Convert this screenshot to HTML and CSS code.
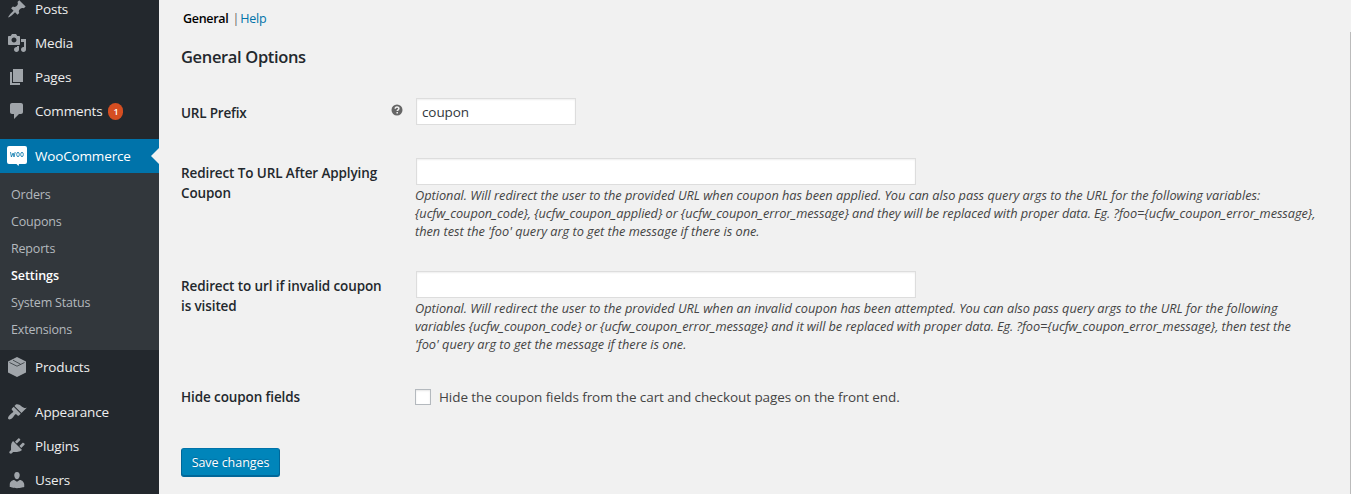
FILE: index.html
```html
<!DOCTYPE html>
<html lang="en">
<head>
<meta charset="utf-8">
<title>WooCommerce Settings</title>
<link rel="stylesheet" href="styles.css">
</head>
<body>
<div class="admin">
  <nav class="sidebar">
    <a class="item"><svg class="icon" viewBox="0 0 20 20"><path d="M10.44 3.02l1.82-1.82 6.36 6.35-1.83 1.82c-1.05-.68-2.48-.57-3.41.36l-.75.75c-.92.93-1.04 2.35-.35 3.41l-1.83 1.82-2.41-2.41-2.8 2.79c-.42.42-3.38 2.71-3.8 2.29s1.86-3.39 2.28-3.81l2.79-2.79L4.1 9.36l1.83-1.82c1.05.69 2.48.57 3.4-.36l.75-.75c.93-.92 1.05-2.35.36-3.41z"/></svg><span>Posts</span></a>
    <a class="item"><svg class="icon" viewBox="0 0 20 20"><path d="M13 11V4c0-.55-.45-1-1-1h-1.67L9 1H5L3.67 3H2c-.55 0-1 .45-1 1v7c0 .55.45 1 1 1h10c.55 0 1-.45 1-1zM7 4.5c1.38 0 2.5 1.12 2.5 2.5S8.38 9.5 7 9.5 4.5 8.38 4.5 7 5.62 4.5 7 4.5zM14 6h5v10.5c0 1.38-1.12 2.5-2.5 2.5S14 17.88 14 16.5s1.12-2.5 2.5-2.5c.17 0 .34.02.5.05V9h-3V6zm-4 8.05V13h2v3.5c0 1.38-1.12 2.5-2.5 2.5S7 17.88 7 16.5 8.12 14 9.5 14c.17 0 .34.02.5.05z"/></svg><span>Media</span></a>
    <a class="item"><svg class="icon" viewBox="0 0 20 20"><path d="M6 15V2h10v13H6zm-1 1h8v2H3V5h2v11z"/></svg><span>Pages</span></a>
    <a class="item"><svg class="icon" viewBox="0 0 20 20"><path d="M5 2h9c1.1 0 2 .9 2 2v7c0 1.1-.9 2-2 2h-2l-5 5v-5H5c-1.1 0-2-.9-2-2V4c0-1.1.9-2 2-2z"/></svg><span>Comments</span><span class="count">1</span></a>
    <a class="item current"><svg class="icon woo" viewBox="0 0 20 20"><path d="M2 0h16a2 2 0 0 1 2 2v14a2 2 0 0 1-2 2h-6l-.5 2-2-2H2a2 2 0 0 1-2-2V2a2 2 0 0 1 2-2z"/><path class="woo-mark" d="M3.500 6l.9 5 1.700-4 .9 4L8.200 6"/><ellipse class="woo-mark" cx="11" cy="8.500" rx="1.300" ry="2.200"/><ellipse class="woo-mark" cx="15" cy="8.500" rx="1.300" ry="2.200"/></svg><span>WooCommerce</span></a>
    <div class="submenu">
      <a>Orders</a><a>Coupons</a><a>Reports</a><a class="active">Settings</a><a>System Status</a><a>Extensions</a>
    </div>
    <a class="item"><svg class="icon" viewBox="0 0 20 20"><path d="M10 0l9 4.500v11L10 20l-9-4.500v-11z"/><path class="box-line" d="M2.500 5.500L10 9.200l7.500-3.700M6 3.200l7.500 4"/></svg><span>Products</span></a>
    <a class="item spaced"><svg class="icon" viewBox="0 0 20 20"><path d="M14.480 11.060L7.410 3.990l1.500-1.500c.5-.56 2.300-.47 3.510.32 1.210.8 1.430 1.280 2.910 2.100 1.180.64 2.450 1.260 4.450.85zm-.71.71L6.700 4.700 4.930 6.470c-.39.39-.39 1.020 0 1.410l1.060 1.060c.39.39.39 1.030 0 1.420-.6.6-1.430 1.110-2.210 1.690-.35.26-.7.53-1.010.84C1.430 14.230.4 16.080 1.400 17.070c.99 1 2.840-.03 4.180-1.360.31-.31.58-.66.85-1.020.57-.78 1.080-1.610 1.690-2.210.39-.39 1.020-.39 1.410 0l1.060 1.060c.39.39 1.020.39 1.410 0z"/></svg><span>Appearance</span></a>
    <a class="item"><svg class="icon" viewBox="0 0 20 20"><path d="M13.110 4.360L9.870 7.600 8 5.730l3.240-3.240c.35-.34 1.050-.2 1.560.32.52.51.66 1.210.31 1.550zm-8 1.770l.91-1.120 9.010 9.010-1.190.84c-.71.71-2.630 1.160-3.820 1.160H6.140L4.900 17.260c-.59.59-1.540.59-2.120 0-.59-.58-.59-1.530 0-2.120l1.240-1.240v-3.880c0-1.130.4-3.190 1.090-3.890zm7.260 3.970l3.240-3.240c.34-.35 1.040-.21 1.550.31.52.51.66 1.210.31 1.550l-3.240 3.250z"/></svg><span>Plugins</span></a>
    <a class="item"><svg class="icon" viewBox="0 0 20 20"><path d="M10 9.250c-2.270 0-2.730-3.440-2.730-3.440C7 4.020 7.820 2 9.970 2c2.160 0 2.980 2.020 2.710 3.810 0 0-.41 3.440-2.680 3.440zm0 2.570L12.720 10c2.390 0 4.520 2.330 4.520 4.530v2.490s-3.650 1.130-7.240 1.130c-3.650 0-7.240-1.130-7.240-1.130v-2.490c0-2.250 1.940-4.480 4.470-4.480z"/></svg><span>Users</span></a>
  </nav>
  <main class="content">
    <div class="tabs"><b>General</b><span class="bar">|</span><a>Help</a></div>
    <h2>General Options</h2>
    <div class="row row-prefix">
      <label>URL Prefix</label>
      <svg class="tip" viewBox="0 0 12 12"><circle cx="6" cy="6" r="5.500"/><path d="M4.200 4.700c0-2.400 3.700-2.300 3.700-.2 0 1.300-1.700 1.300-1.700 2.600M6.200 8.100v1.400"/></svg>
      <input class="short" type="text" value="coupon">
    </div>
    <div class="row row-redirect">
      <label>Redirect To URL After Applying<br>Coupon</label>
      <div class="field"><input type="text">
        <p>Optional. Will redirect the user to the provided URL when coupon has been applied. You can also pass query args to the URL for the following variables:<br><span class="tight">{ucfw_coupon_code}, {ucfw_coupon_applied} or {ucfw_coupon_error_message} and they will be replaced with proper data. Eg. ?foo={ucfw_coupon_error_message},</span><br>then test the 'foo' query arg to get the message if there is one.</p></div>
    </div>
    <div class="row row-invalid">
      <label>Redirect to url if invalid coupon<br>is visited</label>
      <div class="field"><input type="text">
        <p>Optional. Will redirect the user to the provided URL when an invalid coupon has been attempted. You can also pass query args to the URL for the following<br><span class="tight">variables {ucfw_coupon_code} or {ucfw_coupon_error_message} and it will be replaced with proper data. Eg. ?foo={ucfw_coupon_error_message}, then test the</span><br>'foo' query arg to get the message if there is one.</p></div>
    </div>
    <div class="row row-hide">
      <label>Hide coupon fields</label>
      <div class="check"><span class="box"></span><span>Hide the coupon fields from the cart and checkout pages on the front end.</span></div>
    </div>
    <button class="save">Save changes</button>
  </main>
  <div class="edge"></div>
</div>
</body>
</html>
```

FILE: styles.css
```css
* { box-sizing: border-box; }
body {
  margin: 0;
  height: 494px;
  overflow: hidden;
  background: #f1f1f1;
  color: #444;
  font-family: "Open Sans", "Noto Sans", sans-serif;
  font-size: 13px;
}
.admin { display: flex; height: 494px; overflow: hidden; white-space: nowrap; }

.sidebar { width: 159px; flex: none; background: #23282d; }
.item {
  display: flex;
  align-items: center;
  height: 34px;
  padding-left: 7px;
  color: #eee;
  font-size: 13.5px;
  letter-spacing: -0.16px;
}
.item:first-child { margin-top: -8px; }
.item.spaced { margin-top: 11px; }
.item.current {
  position: relative;
  margin-top: 11px;
  background: #0073aa;
  color: #fff;
}
.item.current::after {
  content: "";
  position: absolute;
  right: 0;
  top: 9px;
  border: 8px solid transparent;
  border-left: 0;
  border-right-color: #f1f1f1;
}
.icon { width: 20px; height: 20px; margin-right: 8px; fill: #a0a5aa; flex: none; }
.woo { fill: #fff; }
.woo .woo-mark { fill: none; stroke: #0073aa; stroke-width: 0.8; }
.box-line { fill: none; stroke: #23282d; stroke-width: 0.7; }
.count {
  width: 15px;
  height: 17px;
  margin-left: 6px;
  border-radius: 8px;
  background: #d54e21;
  color: #fff;
  font-size: 9px;
  font-weight: 600;
  line-height: 17px;
  text-align: center;
}
.submenu { padding: 8px 0 7px 11px; background: #32373c; }
.submenu a {
  display: block;
  height: 27px;
  color: #b4b9be;
  font-size: 12.5px;
  letter-spacing: -0.18px;
  line-height: 27px;
}
.submenu .active { color: #fff; font-weight: 600; letter-spacing: -0.05px; }

.content { width: 1190px; padding: 10px 0 0 22px; }
.tabs { display: flex; height: 18px; padding-left: 2px; font-size: 12.5px; line-height: 18px; letter-spacing: -0.2px; }
.tabs b { color: #000; font-weight: 600; letter-spacing: -0.3px; }
.tabs .bar { margin: 0 1px 0 4px; color: #666; }
.tabs a { color: #0073aa; }
h2 { margin: 17px 0 0; height: 24px; color: #23282d; font-size: 16.5px; font-weight: 600; line-height: 24px; letter-spacing: -0.35px; }
.row { display: flex; align-items: flex-start; }
.row label { width: 234px; color: #23282d; font-size: 13.5px; font-weight: 600; line-height: 20px; letter-spacing: -0.11px; }
.row-prefix { margin-top: 29px; height: 60px; }
.row-prefix label { width: 210px; padding-top: 5px; letter-spacing: -0.2px; }
.tip { width: 12px; height: 12px; margin: 6px 12px 0 0; fill: #666; }
.tip path { fill: none; stroke: #f1f1f1; stroke-width: 1.5; }
input {
  display: block;
  width: 500px;
  height: 27px;
  margin: 0 0 0 1px;
  padding: 2px 5px;
  border: 1px solid #ddd;
  background: #fff;
  box-shadow: inset 0 1px 2px rgba(0, 0, 0, 0.07);
  color: #32373c;
  font: 13.5px "Open Sans", sans-serif;
  letter-spacing: -0.1px;
}
input.short { width: 160px; }
.row-redirect, .row-invalid { height: 113px; }
.row-redirect label, .row-invalid label { padding-top: 5px; }
p { margin: 1px 0 0; font-size: 12.75px; font-style: italic; line-height: 18px; letter-spacing: -0.015px; }
.tight { letter-spacing: -0.062px; }
.row-hide { height: 65px; padding-top: 3px; }
.check { display: flex; align-items: center; height: 20px; font-size: 13.5px; letter-spacing: -0.08px; }
.box { width: 16px; height: 16px; margin-right: 8px; border: 1px solid #b4b9be; background: #fff; box-shadow: inset 0 1px 2px rgba(0, 0, 0, 0.1); }
.save {
  display: block;
  width: 99px;
  height: 29px;
  margin-top: -1px;
  padding: 0;
  border: 1px solid;
  border-color: #0073aa #006799 #006799;
  border-radius: 3px;
  background: #0085ba;
  box-shadow: inset 0 -1px 0 #006799;
  color: #fff;
  font: 12.5px "Open Sans", sans-serif;
  letter-spacing: -0.05px;
  text-shadow: 0 -1px 1px #006799;
}
.edge { width: 1px; height: 462px; margin: 32px 0 0 1px; background: #bbb; }
```
